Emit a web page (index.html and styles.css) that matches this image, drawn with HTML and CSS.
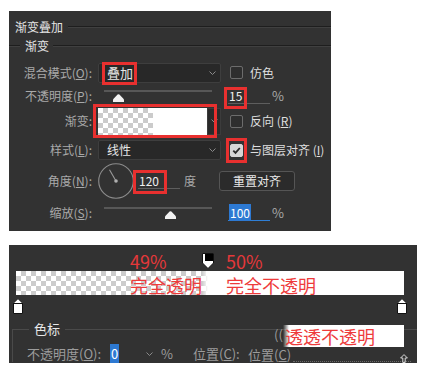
FILE: index.html
```html
<!DOCTYPE html>
<html lang="zh-CN">
<head>
<meta charset="utf-8">
<title>渐变叠加</title>
<link rel="stylesheet" href="styles.css">
</head>
<body>
<div class="page">
  <section class="panel top">
    <div class="hdr h1"><span class="hdr-text">渐变叠加</span><span class="rule"></span></div>
    <div class="hdr h2"><span class="rule lead"></span><span class="hdr-text">渐变</span><span class="rule"></span></div>
    <div class="rows">
      <div class="row r1">
        <span class="lbl">混合模式(<u>O</u>):</span>
        <div class="select">
          <span class="sel-val big">叠加</span>
          <svg class="chev" width="7" height="4" viewBox="0 0 7 4"><path d="M0.5 0.5 L3.5 3.5 L6.5 0.5" fill="none" stroke="#8a8a8a"/></svg>
          <span class="redbox rb-mode"></span>
        </div>
        <span class="check"></span><span class="ctext">仿色</span>
      </div>
      <div class="row r2">
        <span class="lbl">不透明度(<u>P</u>):</span>
        <div class="slider">
          <div class="track"></div>
          <svg class="thumb thumb-op" width="11" height="8" viewBox="0 0 11 8"><path d="M0 8 V6.2 Q0 5.2 0.8 4.4 L4.6 0.6 Q5.5 -0.2 6.4 0.6 L10.2 4.4 Q11 5.2 11 6.2 V8 Z" fill="#f2f2f2"/></svg>
        </div>
        <div class="field">
          <span class="fval">15</span>
          <span class="redbox rb-op"></span>
        </div>
        <span class="pct">%</span>
      </div>
      <div class="row r3">
        <span class="lbl">渐变:</span>
        <div class="grad">
          <div class="swatch"></div>
          <div class="grad-arrow"><svg width="7" height="4" viewBox="0 0 7 4"><path d="M0.5 0.5 L3.5 3.5 L6.5 0.5" fill="none" stroke="#8a8a8a"/></svg></div>
          <span class="redbox rb-grad"></span>
        </div>
        <span class="check"></span><span class="ctext">反向 (<u>R</u>)</span>
      </div>
      <div class="row r4">
        <span class="lbl">样式(<u>L</u>):</span>
        <div class="select">
          <span class="sel-val">线性</span>
          <svg class="chev" width="7" height="4" viewBox="0 0 7 4"><path d="M0.5 0.5 L3.5 3.5 L6.5 0.5" fill="none" stroke="#8a8a8a"/></svg>
        </div>
        <span class="check checked">
          <svg width="11" height="11" viewBox="0 0 11 11"><path d="M2.3 5.6 L4.5 7.9 L8.8 3" fill="none" stroke="#2a2a2a" stroke-width="1.8"/></svg>
          <span class="redbox rb-check"></span>
        </span>
        <span class="ctext">与图层对齐 (<u>I</u>)</span>
      </div>
      <div class="row r5">
        <span class="lbl">角度(<u>N</u>):</span>
        <svg class="dial" width="36" height="36" viewBox="0 0 36 36">
          <circle cx="18" cy="18" r="17.3" fill="none" stroke="#8c8c8c" stroke-width="1.1"/>
          <line x1="18" y1="18" x2="11.5" y2="6.8" stroke="#9a9a9a" stroke-width="1.1"/>
          <circle cx="18" cy="18" r="1.8" fill="#b0b0b0"/>
        </svg>
        <div class="field f-angle">
          <span class="fval">120</span>
          <span class="redbox rb-angle"></span>
        </div>
        <span class="deg">度</span>
        <button class="btn">重置对齐</button>
      </div>
      <div class="row r6">
        <span class="lbl">缩放(<u>S</u>):</span>
        <div class="slider">
          <div class="track"></div>
          <svg class="thumb thumb-scale" width="11" height="8" viewBox="0 0 11 8"><path d="M0 8 V6.2 Q0 5.2 0.8 4.4 L4.6 0.6 Q5.5 -0.2 6.4 0.6 L10.2 4.4 Q11 5.2 11 6.2 V8 Z" fill="#f2f2f2"/></svg>
        </div>
        <div class="field f-sel">
          <span class="fval"><span class="selected">100</span></span>
        </div>
        <span class="pct">%</span>
      </div>
    </div>
  </section>

  <section class="panel bottom">
    <div class="pct-row">
      <span class="p49">49%</span>
      <svg class="ostop" width="12" height="16" viewBox="0 0 12 16"><path d="M0.5 0.5 H11.5 V10 L6 15.5 L0.5 10 Z" fill="#fff" stroke="#111"/><rect x="3" y="1" width="8" height="7" fill="#000"/></svg>
      <span class="p50">50%</span>
    </div>
    <div class="bar">
      <span class="bt1">完全透明</span><span class="bt2">完全不透明</span>
    </div>
    <div class="stops">
      <svg width="10" height="16" viewBox="0 0 10 16"><path d="M5 0.6 L9.5 5 V15.5 H0.5 V5 Z" fill="#fff" stroke="#111"/><path d="M0.5 5.5 H9.5" stroke="#111"/></svg>
      <svg width="10" height="16" viewBox="0 0 10 16"><path d="M5 0.6 L9.5 5 V15.5 H0.5 V5 Z" fill="#fff" stroke="#111"/><path d="M0.5 5.5 H9.5" stroke="#111"/></svg>
    </div>
    <fieldset class="group">
      <legend>色标</legend>
      <div class="crow">
        <span class="c-lbl">不透明度(<u>O</u>):</span>
        <span class="c-val"><span class="selected">0</span></span>
        <svg class="c-chev" width="7" height="4" viewBox="0 0 7 4"><path d="M0.5 0.5 L3.5 3.5 L6.5 0.5" fill="none" stroke="#8a8a8a"/></svg>
        <span class="c-pct">%</span>
        <span class="c-pos">位置(<u>C</u>):</span>
        <span class="c-pos2">位置(<u>C</u>)</span>
        <span class="c-tail"></span>
      </div>
    </fieldset>
    <span class="frag">((</span>
    <div class="glitch">透透不透明</div>
    <svg class="mini" width="8" height="9" viewBox="0 0 8 9"><path d="M4 0.6 L7.4 4 H5.2 V8.5 H2.8 V4 H0.6 Z" fill="none" stroke="#d8d8d8"/></svg>
  </section>
</div>
</body>
</html>
```

FILE: styles.css
```css
* { box-sizing: border-box; }

body {
  margin: 0;
  background: #ffffff;
  font-family: "Noto Sans CJK SC", "Noto Sans", sans-serif;
}

u { text-decoration: underline; text-underline-offset: 1px; }

.page { padding: 11px 0 0 9px; }

.panel {
  background: #323232;
  color: #acacac;
  overflow: hidden;
}

/* ---------- top panel ---------- */
.top {
  width: 322px;
  height: 220px;
  padding-top: 8px;
}

.hdr {
  display: flex;
  align-items: center;
  height: 16px;
  font-size: 12px;
  line-height: 16px;
  color: #e4e4e4;
}
.h1 { padding-left: 6px; }
.h1 .rule { margin-left: 5px; }
.h2 { margin-top: 3px; }
.h2 .hdr-text + .rule { margin-left: 4px; }

.rule {
  flex: 1;
  height: 2px;
  border-top: 1px solid #1e1e1e;
  border-bottom: 1px solid #404040;
}
.rule.lead { flex: none; width: 11px; margin-right: 5px; }

.rows { margin-top: 6px; }

.row {
  display: flex;
  align-items: center;
  font-size: 12px;
  line-height: 16px;
}
.r1 { height: 25px; }
.r2 { height: 22px; }
.r3 { height: 28px; }
.r4 { height: 30px; }
.r5 { height: 32px; }
.r6 { height: 32px; }

.lbl {
  flex: none;
  width: 83px;
  text-align: right;
  color: #a9a9a9;
}

.select {
  position: relative;
  flex: none;
  width: 123px;
  height: 20px;
  margin-left: 6px;
  padding: 0 4px 0 8px;
  display: flex;
  align-items: center;
  justify-content: space-between;
  background: #282828;
  border: 1px solid #3e3e3e;
  border-radius: 2px;
  color: #e6e6e6;
}
.sel-val { font-size: 12px; line-height: 16px; }
.sel-val.big { font-size: 13px; }

.redbox {
  position: absolute;
  border: 3px solid #e8302f;
  pointer-events: none;
}
.rb-mode { left: 3px; top: -2px; width: 35px; height: 23px; }
.rb-op { left: -4px; top: -2px; width: 23px; height: 22px; }
.rb-grad { left: -5px; top: -4px; width: 124px; height: 34px; }
.rb-check { left: -5px; top: -7px; width: 21px; height: 25px; }
.rb-angle { left: -5px; top: -4px; width: 34px; height: 24px; }

.check {
  position: relative;
  flex: none;
  width: 13px;
  height: 13px;
  margin-left: 9px;
  border: 1px solid #6c6c6c;
  border-radius: 2px;
  background: #2e2e2e;
  display: flex;
  align-items: center;
  justify-content: center;
}
.check.checked {
  background: #d6d6d6;
  border-color: #d6d6d6;
}

.ctext {
  margin-left: 7px;
  color: #dedede;
}

.slider {
  flex: none;
  width: 108px;
  height: 12px;
  margin-left: 12px;
  display: flex;
  flex-direction: column;
}
.track {
  height: 2px;
  background: #575757;
}
.thumb { display: block; margin-top: 2px; }
.thumb-op { margin-left: 9px; }
.thumb-scale { margin-left: 61px; }

.field {
  position: relative;
  flex: none;
  width: 42px;
  height: 15px;
  margin-left: 16px;
  border-bottom: 1px solid #5e5e5e;
  color: #f0f0f0;
  line-height: 14px;
  padding-left: 1px;
}
.f-angle { margin-left: 4px; }
.f-sel { border-bottom-color: #2f7fd6; }

.selected {
  background: #2d79d2;
  color: #ffffff;
  padding: 0 1px;
}

.pct { margin-left: 2px; color: #a9a9a9; font-size: 13px; }

.grad {
  position: relative;
  flex: none;
  width: 123px;
  height: 27px;
  margin-left: 6px;
  display: flex;
}
.swatch {
  width: 109px;
  background:
    linear-gradient(to right, rgba(255,255,255,0) 55px, #ffffff 55px),
    repeating-conic-gradient(#cbcbcb 0 25%, #ffffff 0 50%) 0 0 / 10px 10px;
}
.grad-arrow {
  flex: 1;
  display: flex;
  align-items: center;
  justify-content: center;
  background: #2a2a2a;
  border: 1px solid #3c3c3c;
}

.dial { flex: none; margin-left: 6px; display: block; }

.deg { margin-left: 4px; color: #a9a9a9; }

.btn {
  flex: none;
  width: 76px;
  height: 20px;
  margin-left: 23px;
  padding: 0;
  background: #2b2b2b;
  border: 1px solid #555555;
  border-radius: 3px;
  color: #e8e8e8;
  font-family: inherit;
  font-size: 12px;
  line-height: 16px;
}

/* ---------- bottom panel ---------- */
.bottom {
  position: relative;
  width: 408px;
  height: 118px;
  margin-top: 14px;
  padding-top: 7px;
}

.pct-row {
  display: flex;
  align-items: flex-start;
  height: 19px;
  padding-left: 121px;
  font-size: 18px;
  line-height: 18px;
  color: #e5383a;
}
.p49 { width: 72px; }
.ostop { display: block; margin-top: 1px; }
.p50 { margin-left: 12px; }

.bar {
  display: flex;
  margin-left: 7px;
  width: 388px;
  height: 24px;
  padding: 3px 0 0 114px;
  font-size: 18px;
  line-height: 22px;
  color: #ee3b3b;
  background:
    linear-gradient(to right, rgba(255,255,255,0) 186px, #ffffff 192px),
    repeating-conic-gradient(#cccccc 0 25%, #ffffff 0 50%) 0 0 / 10px 10px;
}
.bt1 { width: 96px; }

.stops {
  display: flex;
  justify-content: space-between;
  height: 21px;
  padding: 3px 10px 0 4px;
}
.stops svg { display: block; }

.group {
  margin: 5px 0 0 3px;
  padding: 9px 0 0 14px;
  border: 0;
  border-top: 1px solid #4a4a4a;
  border-left: 1px solid #4a4a4a;
  min-width: 0;
}
.group legend {
  margin-left: 2px;
  padding: 0 5px;
  font-size: 13px;
  line-height: 16px;
  color: #e8e8e8;
}

.crow {
  display: flex;
  align-items: center;
  height: 16px;
  font-size: 13px;
  line-height: 16px;
  color: #9c9c9c;
}
.c-lbl { width: 83px; flex: none; }
.c-val { width: 36px; flex: none; }
.c-chev { flex: none; }
.c-pct { margin-left: 8px; width: 32px; flex: none; }
.c-pos { width: 55px; flex: none; }
.c-pos2 { flex: none; line-height: 14px; margin-top: 2px; }
.c-tail {
  flex: 1;
  align-self: flex-end;
  margin: 0 6px 0 2px;
  border-bottom: 1px dotted #6a6a6a;
}

.frag {
  position: absolute;
  left: 265px;
  top: 82px;
  font-size: 13px;
  line-height: 16px;
  color: #9a9a9a;
}

.glitch {
  position: absolute;
  left: 274px;
  top: 80px;
  width: 121px;
  height: 22px;
  padding: 1px 0 0 2px;
  font-size: 18px;
  line-height: 20px;
  color: #ee3b3b;
  background: linear-gradient(to right, rgba(255,255,255,0) 0, #ffffff 6px);
}

.mini {
  position: absolute;
  left: 391px;
  top: 109px;
  display: block;
}
```
